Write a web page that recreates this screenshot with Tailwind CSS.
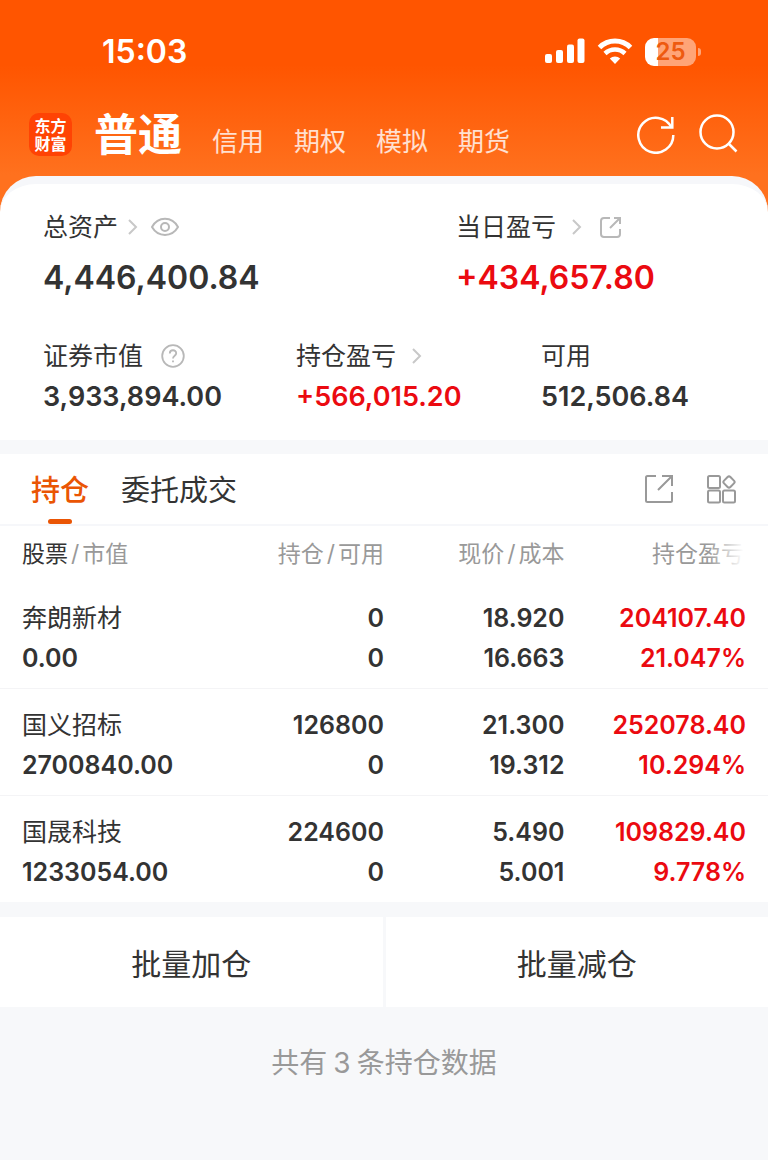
<!DOCTYPE html>
<html lang="zh-CN">
<head>
    <meta charset="UTF-8">
    <meta name="viewport" content="width=device-width, initial-scale=1.0">
    <title>普通 - 持仓</title>
    <script src="https://cdn.jsdelivr.net/npm/@tailwindcss/browser@4"></script>
</head>
<body class="min-h-screen bg-[#f7f8fa] font-['Inter','Noto_Sans_CJK_SC',sans-serif] text-[#333333]">
    <div class="bg-[linear-gradient(#ff5500_65px,#ff711e_175px)]">
        <!-- Status bar -->
        <div class="flex h-26 items-center justify-between pl-[102px] pr-[67px]">
            <span class="text-[32px] leading-10 font-semibold text-white">15:03</span>
            <div class="flex items-center gap-3">
                <svg class="h-7 w-10" viewBox="0 0 40 28" fill="#fff" aria-hidden="true">
                    <rect x="0" y="16" width="7" height="9" rx="2"/>
                    <rect x="11" y="12" width="7" height="13" rx="2"/>
                    <rect x="22" y="6.500" width="7" height="18.500" rx="2"/>
                    <rect x="32.500" y="0.500" width="7" height="24.500" rx="2"/>
                </svg>
                <svg class="h-7 w-9" viewBox="0 0 36 28" aria-hidden="true">
                    <path d="M2.500 9.500A22 22 0 0 1 33.500 9.500" fill="none" stroke="#fff" stroke-width="5"/>
                    <path d="M8 15.500A14.500 14.500 0 0 1 28 15.500" fill="none" stroke="#fff" stroke-width="4.500"/>
                    <path d="M12.800 20.500A7.500 7.500 0 0 1 23.200 20.500L18 26Z" fill="#fff"/>
                </svg>
                <div class="flex items-center gap-0.5">
                    <div class="flex h-7 w-[51px] items-center justify-center rounded-[9px] bg-[linear-gradient(to_right,#fff_25%,#ffa477_25%)] text-2xl font-semibold text-[#ee5a10]">25</div>
                    <div class="h-2 w-[3px] rounded-r-full bg-[#ffa477]"></div>
                </div>
            </div>
        </div>

        <!-- Account tabs -->
        <header class="flex h-[72px] items-start justify-between pl-[29px] pr-[30px] pt-1">
            <div class="flex items-start">
                <a href="#" class="mt-[5px] flex size-[43px] flex-col items-center justify-center rounded-[10px] bg-[#ff4304] text-base leading-[18px] font-bold text-white">
                    <span>东方</span>
                    <span>财富</span>
                </a>
                <nav class="ml-[22px] flex items-baseline gap-[30px] text-[26px] leading-[54px] text-white/80">
                    <a href="#" class="text-[44px] font-bold text-white">普通</a>
                    <a href="#">信用</a>
                    <a href="#">期权</a>
                    <a href="#">模拟</a>
                    <a href="#">期货</a>
                </nav>
            </div>
            <div class="mt-1.5 flex gap-[22px]">
                <button type="button" aria-label="刷新">
                    <svg class="size-10" viewBox="0 0 40 40" fill="none" stroke="#fff" stroke-width="2.500">
                        <path d="M37.300 21A17.500 17.500 0 1 1 35.500 13.500"/>
                        <path d="M36.300 3V13.500H25"/>
                    </svg>
                </button>
                <button type="button" aria-label="搜索">
                    <svg class="size-10" viewBox="0 0 40 40" fill="none" stroke="#fff" stroke-width="2.500">
                        <circle cx="19" cy="18" r="16.500"/>
                        <path d="M30.500 29.500L38.500 37.500"/>
                    </svg>
                </button>
            </div>
        </header>

        <!-- Asset summary -->
        <section class="overflow-hidden rounded-t-[36px] border-t-8 border-[#f6f7fa] bg-white px-[43px] pt-[27px] pb-[23px] text-[25px] leading-8">
            <div class="grid grid-cols-[413fr_269fr]">
                <div>
                    <div class="flex items-center">
                        <span>总资产</span>
                        <svg class="ml-[9px] h-5 w-3" viewBox="0 0 12 20" fill="none" stroke="#c8c8c8" stroke-width="2"><path d="M2 3l7 7-7 7"/></svg>
                        <button type="button" aria-label="隐藏金额" class="ml-3">
                            <svg class="h-5 w-7" viewBox="0 0 28 20" fill="none" stroke="#b8b8b8" stroke-width="2">
                                <path d="M1 10C7-1 21-1 27 10C21 20.500 7 20.500 1 10Z"/>
                                <circle cx="14" cy="10" r="4"/>
                            </svg>
                        </button>
                    </div>
                    <div class="mt-[15px] text-[32px] leading-10 font-semibold">4,446,400.84</div>
                </div>
                <div>
                    <div class="flex items-center">
                        <span>当日盈亏</span>
                        <svg class="ml-[15px] h-5 w-3" viewBox="0 0 12 20" fill="none" stroke="#c8c8c8" stroke-width="2"><path d="M2 3l7 7-7 7"/></svg>
                        <button type="button" aria-label="分享当日盈亏" class="ml-4">
                            <svg class="size-6" viewBox="0 0 24 24" fill="none" stroke="#b8b8b8" stroke-width="2">
                                <path d="M11 3H5A3 3 0 0 0 2 6V19A3 3 0 0 0 5 22H18A3 3 0 0 0 21 19V14"/>
                                <path d="M15 3H21V9M21 3L11 13"/>
                            </svg>
                        </button>
                    </div>
                    <div class="mt-[15px] text-[32px] leading-10 font-semibold text-[#eb0a10]">+434,657.80</div>
                </div>
            </div>
            <div class="mt-[42px] grid grid-cols-[253fr_245fr_184fr]">
                <div>
                    <div class="flex items-center">
                        <span>证券市值</span>
                        <button type="button" aria-label="说明" class="ml-[18px]">
                            <svg class="size-6" viewBox="0 0 24 24" fill="none" stroke="#b8b8b8" stroke-width="1.800">
                                <circle cx="12" cy="12" r="10.800"/>
                                <path d="M8.800 9.500C8.800 5.200 15.200 5.200 15.200 9.300C15.200 11.800 12 11.800 12 14.500M12 16.500V18.300"/>
                            </svg>
                        </button>
                    </div>
                    <div class="mt-[5px] text-[27px] leading-10 font-semibold">3,933,894.00</div>
                </div>
                <div>
                    <div class="flex items-center">
                        <span>持仓盈亏</span>
                        <svg class="ml-[15px] h-5 w-3" viewBox="0 0 12 20" fill="none" stroke="#c8c8c8" stroke-width="2"><path d="M2 3l7 7-7 7"/></svg>
                    </div>
                    <div class="mt-[5px] text-[27px] leading-10 font-semibold text-[#eb0a10]">+566,015.20</div>
                </div>
                <div>
                    <div>可用</div>
                    <div class="mt-[5px] text-[27px] leading-10 font-semibold">512,506.84</div>
                </div>
            </div>
        </section>
    </div>

    <main>
        <!-- Positions -->
        <section class="mt-3.5 bg-white">
            <div class="flex h-18 items-center justify-between border-b-2 border-[#f6f7fa] pl-[31px] pr-8">
                <div class="flex h-full gap-8 text-[29px]">
                    <button type="button" class="relative pt-1 font-medium text-[#ea5504]">
                        持仓
                        <span class="absolute bottom-0 left-1/2 h-[5px] w-6 -translate-x-1/2 rounded-sm bg-[#ea5504]"></span>
                    </button>
                    <button type="button" class="pt-1">委托成交</button>
                </div>
                <div class="flex gap-8">
                    <button type="button" aria-label="分享持仓">
                        <svg class="size-[30px]" viewBox="0 0 30 30" fill="none" stroke="#999" stroke-width="2">
                            <path d="M12 2H3.500Q2 2 2 3.500V26.500Q2 28 3.500 28H26.500Q28 28 28 26.500V18"/>
                            <path d="M18 2H28V12M28 2L14 16"/>
                        </svg>
                    </button>
                    <button type="button" aria-label="更多功能">
                        <svg class="size-[30px]" viewBox="0 0 30 30" fill="none" stroke="#999" stroke-width="2">
                            <rect x="2" y="2" width="12" height="12" rx="1.500"/>
                            <rect x="2" y="16.500" width="12" height="12" rx="1.500"/>
                            <rect x="17" y="16.500" width="12" height="12" rx="1.500"/>
                            <rect x="18.500" y="3.500" width="9" height="9" rx="2" transform="rotate(45 23 8)"/>
                        </svg>
                    </button>
                </div>
            </div>

            <table class="w-full table-fixed text-right text-[25px] leading-10 font-semibold">
                <colgroup>
                    <col class="w-[26%]">
                    <col class="w-[24%]">
                    <col class="w-[23.5%]">
                    <col class="w-[26.5%]">
                </colgroup>
                <thead class="text-[23px] text-[#999999]">
                    <tr class="h-14">
                        <th class="pl-[22px] text-left font-normal"><span class="text-[#333333]">股票</span><span class="mx-[3px]">/</span>市值</th>
                        <th class="font-normal">持仓<span class="mx-[3px]">/</span>可用</th>
                        <th class="font-normal">现价<span class="mx-[3px]">/</span>成本</th>
                        <th class="pr-6 font-normal">
                            <span class="relative inline-block">持仓盈亏<span class="absolute inset-y-0 right-0 w-9 bg-linear-to-r from-white/0 to-white"></span></span>
                        </th>
                    </tr>
                </thead>
                <tbody>
                    <tr class="border-b border-[#f4f4f6]">
                        <td class="pt-4 pb-2.5 pl-[22px] text-left"><div class="font-normal">奔朗新材</div><div>0.00</div></td>
                        <td class="pt-4 pb-2.5"><div>0</div><div>0</div></td>
                        <td class="pt-4 pb-2.5"><div>18.920</div><div>16.663</div></td>
                        <td class="pt-4 pb-2.5 pr-[22px] text-[#eb0a10]"><div>204107.40</div><div>21.047%</div></td>
                    </tr>
                    <tr class="border-b border-[#f4f4f6]">
                        <td class="pt-4 pb-2.5 pl-[22px] text-left"><div class="font-normal">国义招标</div><div>2700840.00</div></td>
                        <td class="pt-4 pb-2.5"><div>126800</div><div>0</div></td>
                        <td class="pt-4 pb-2.5"><div>21.300</div><div>19.312</div></td>
                        <td class="pt-4 pb-2.5 pr-[22px] text-[#eb0a10]"><div>252078.40</div><div>10.294%</div></td>
                    </tr>
                    <tr>
                        <td class="pt-4 pb-2.5 pl-[22px] text-left"><div class="font-normal">国晟科技</div><div>1233054.00</div></td>
                        <td class="pt-4 pb-2.5"><div>224600</div><div>0</div></td>
                        <td class="pt-4 pb-2.5"><div>5.490</div><div>5.001</div></td>
                        <td class="pt-4 pb-2.5 pr-[22px] text-[#eb0a10]"><div>109829.40</div><div>9.778%</div></td>
                    </tr>
                </tbody>
            </table>
        </section>

        <!-- Batch actions -->
        <div class="mt-[15px] grid grid-cols-2 gap-[3px] text-[30px]">
            <button type="button" class="h-[90px] bg-white pt-1">批量加仓</button>
            <button type="button" class="h-[90px] bg-white pt-1">批量减仓</button>
        </div>

        <p class="py-[34px] text-center text-[28px] leading-[44px] text-[#999999]">共有<span class="mx-1.5">3</span>条持仓数据</p>
    </main>
</body>
</html>
